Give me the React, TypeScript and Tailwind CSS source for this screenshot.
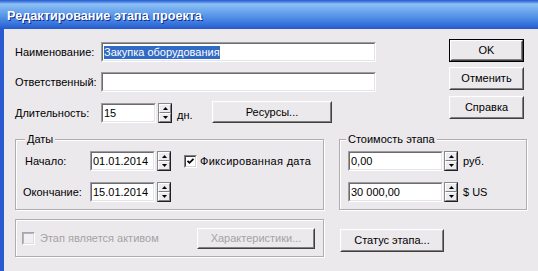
import React from "react";

const font = "font-['Liberation_Sans',Arial,sans-serif]";

function Field({ className = "", children }: { className?: string; children?: React.ReactNode }) {
  return (
    <div className={`border border-t-[#9d9ca1] border-l-[#9d9ca1] border-b-white border-r-white shrink-0 ${className}`}>
      <div className="h-full w-full border border-t-[#6b6b70] border-l-[#6b6b70] border-b-[#e4e3e7] border-r-[#e4e3e7] bg-white flex items-center pl-[1px] text-[11px] leading-[13px] text-black overflow-hidden whitespace-nowrap">
        {children}
      </div>
    </div>
  );
}

function Btn({
  className = "",
  children,
  disabled = false,
  isDefault = false,
}: {
  className?: string;
  children?: React.ReactNode;
  disabled?: boolean;
  isDefault?: boolean;
}) {
  const face = (
    <div className="h-full w-full border border-t-white border-l-white border-b-[#404040] border-r-[#404040]">
      <div
        className={`h-full w-full border border-t-[#ecebef] border-l-[#ecebef] border-b-[#808080] border-r-[#808080] flex items-center justify-center whitespace-nowrap text-[11px] leading-[13px] ${
          disabled ? "text-[#a3a3a3]" : "text-black"
        }`}
      >
        {children}
      </div>
    </div>
  );
  if (isDefault) {
    return <div className={`border border-black shrink-0 ${className}`}>{face}</div>;
  }
  return <div className={`shrink-0 ${className}`}>{face}</div>;
}

function Arrow({ up }: { up: boolean }) {
  return (
    <svg width="5" height="3" viewBox="0 0 5 3" className="block">
      {up ? <polygon points="2.5,0 5,3 0,3" fill="#000" /> : <polygon points="0,0 5,0 2.5,3" fill="#000" />}
    </svg>
  );
}

function Spin({ className = "" }: { className?: string }) {
  return (
    <div
      className={`w-[14px] h-[20px] shrink-0 flex flex-col border border-t-[#8a8a8e] border-l-[#8a8a8e] border-b-[#202020] border-r-[#202020] ${className}`}
    >
      <div className="flex-1 flex items-center justify-center border border-t-white border-l-white border-b-[#808080] border-r-[#808080] bg-[#ecebef]">
        <Arrow up />
      </div>
      <div className="flex-1 flex items-center justify-center border border-t-white border-l-white border-b-[#808080] border-r-[#808080] bg-[#ecebef]">
        <Arrow up={false} />
      </div>
    </div>
  );
}

function Check({ checked = false, disabled = false, className = "" }: { checked?: boolean; disabled?: boolean; className?: string }) {
  return (
    <div
      className={`w-[13px] h-[13px] shrink-0 border ${
        disabled
          ? "border-t-[#a6a5aa] border-l-[#a6a5aa] border-b-white border-r-white"
          : "border-t-[#808080] border-l-[#808080] border-b-white border-r-white"
      } ${className}`}
    >
      <div
        className={`h-full w-full border flex items-center justify-center ${
          disabled
            ? "border-t-[#b5b4b9] border-l-[#b5b4b9] border-b-[#dddce0] border-r-[#dddce0] bg-[#f0eff3]"
            : "border-t-[#404040] border-l-[#404040] border-b-[#d4d3d8] border-r-[#d4d3d8] bg-white"
        }`}
      >
        {checked && (
          <svg width="9" height="9" viewBox="0 0 9 9" className="block">
            <path d="M1.5 3.8 L3.5 5.8 L7.5 1.8" stroke="#000" strokeWidth="1.8" fill="none" />
          </svg>
        )}
      </div>
    </div>
  );
}

const groupCls =
  "border border-[#aeadb2] [box-shadow:inset_1px_1px_0_#fff,1px_1px_0_#fff]";

export default function App() {
  return (
    <div className={`w-[538px] h-[271px] overflow-hidden flex flex-col bg-[#ece9ed] ${font} text-[11px] leading-[13px] text-black`}>
      <div className="h-[29px] shrink-0 flex items-start pt-[9px] pl-[7px] bg-[linear-gradient(to_bottom,#2a58cc_0px,#4a86e4_2px,#8fc0f4_4px,#74aef0_9px,#5794e8_16px,#3e7ce0_22px,#2d63d2_27px,#2656c6_29px)]">
        <span className="text-white font-bold text-[12.7px] leading-[15px] [text-shadow:1px_1px_0_#0e2b8c]">
          Редактирование этапа проекта
        </span>
      </div>

      <div className="flex-1 border-l-[4px] border-l-[#2b5bd1] pl-[11px] pt-[10px]">
        {/* top section */}
        <div className="flex">
          <div className="w-[361px] pt-[3px] flex flex-col">
            <div className="flex items-center h-[20px]">
              <span className="w-[86px] shrink-0">Наименование:</span>
              <Field className="w-[275px] h-[20px]">
                <span className="bg-[#316ac5] text-white">Закупка оборудования</span>
              </Field>
            </div>
            <div className="flex items-center h-[20px] mt-[10px]">
              <span className="w-[86px] shrink-0">Ответственный:</span>
              <Field className="w-[275px] h-[20px]" />
            </div>
            <div className="flex items-center h-[20px] mt-[11px]">
              <span className="w-[86px] shrink-0">Длительность:</span>
              <Field className="w-[55px] h-[20px]">15</Field>
              <Spin className="ml-[2px]" />
              <span className="ml-[5px] w-[35px] shrink-0 mt-[4px]">дн.</span>
              <Btn className="w-[120px] h-[22px] self-end">Ресурсы...</Btn>
            </div>
          </div>
          <div className="ml-[73px] w-[75px] flex flex-col">
            <Btn isDefault className="h-[23px]">OK</Btn>
            <Btn className="h-[23px] mt-[5px]">Отменить</Btn>
            <Btn className="h-[23px] mt-[6px]">Справка</Btn>
          </div>
        </div>

        {/* group boxes */}
        <div className="flex mt-[9px]">
          <fieldset className={`w-[309px] pb-[7px] ${groupCls}`}>
            <legend className="ml-[9px] px-[2px] leading-[14px] bg-[#ece9ed]">Даты</legend>
            <div className="mt-[5px] flex items-center h-[20px]">
              <span className="ml-[9px] w-[65px] shrink-0">Начало:</span>
              <Field className="w-[65px] h-[20px]">01.01.2014</Field>
              <Spin className="ml-[2px]" />
              <Check checked className="ml-[13px]" />
              <span className="ml-[3px] tracking-[0.3px]">Фиксированная дата</span>
            </div>
            <div className="mt-[11px] flex items-center h-[20px]">
              <span className="ml-[7px] w-[67px] shrink-0">Окончание:</span>
              <Field className="w-[65px] h-[20px]">15.01.2014</Field>
              <Spin className="ml-[2px]" />
            </div>
          </fieldset>

          <fieldset className={`ml-[15px] w-[188px] pb-[7px] ${groupCls}`}>
            <legend className="ml-[6px] px-[2px] leading-[14px] bg-[#ece9ed]">Стоимость этапа</legend>
            <div className="mt-[5px] flex items-center h-[20px] pl-[8px]">
              <Field className="w-[95px] h-[20px]">0,00</Field>
              <Spin className="ml-[1px]" />
              <span className="ml-[5px]">руб.</span>
            </div>
            <div className="mt-[11px] flex items-center h-[20px] pl-[8px]">
              <Field className="w-[95px] h-[20px]">30 000,00</Field>
              <Spin className="ml-[1px]" />
              <span className="ml-[5px]">$ US</span>
            </div>
          </fieldset>
        </div>

        {/* bottom */}
        <div className="flex items-start mt-[9px]">
          <div className={`w-[309px] h-[38px] flex items-center pl-[6px] pr-[8px] ${groupCls}`}>
            <Check disabled />
            <span className="ml-[5px] text-[#a3a3a3]">Этап является активом</span>
            <Btn disabled className="ml-auto w-[118px] h-[21px]">Характеристики...</Btn>
          </div>
          <Btn className="ml-[16px] mt-[10px] w-[104px] h-[23px]">Статус этапа...</Btn>
        </div>
      </div>
    </div>
  );
}
